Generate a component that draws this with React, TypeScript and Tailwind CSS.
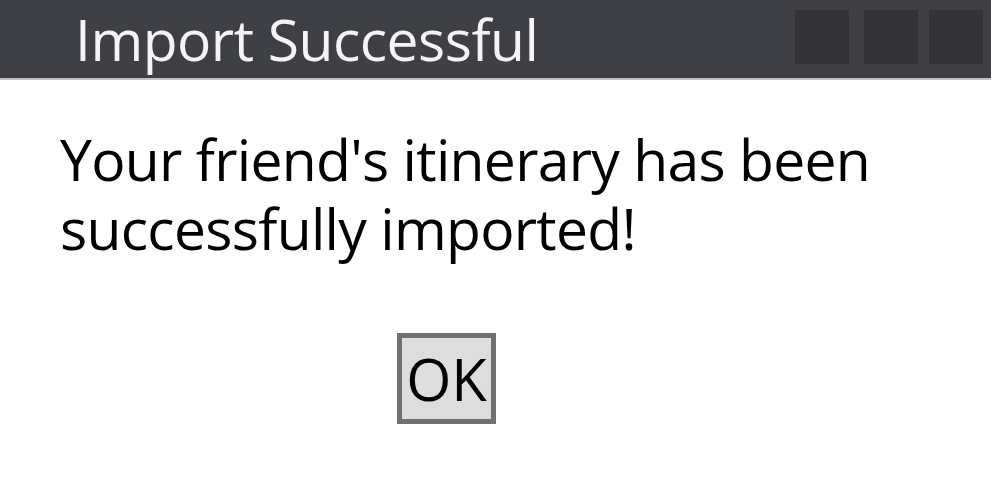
export default function App() {
  return (
    <div className="flex h-[496px] w-[991px] flex-col bg-white font-['Open_Sans',sans-serif]">
      <div className="flex h-[80px] items-start justify-between border-b-2 border-[#c4c4c6] bg-[#3f4045] pl-[75px] pr-[8px]">
        <h1 className="pt-[11px] text-[57px] leading-none tracking-[-0.5px] text-[#f4f4f6]">Import Successful</h1>
        <div className="flex pt-[10px]">
          <div className="mr-[15px] h-[54px] w-[54px] bg-[#343438]" />
          <div className="mr-[11px] h-[54px] w-[54px] bg-[#343438]" />
          <div className="h-[54px] w-[54px] bg-[#343438]" />
        </div>
      </div>
      <div className="flex flex-col px-[60px] pt-[45px]">
        <p className="w-[860px] text-[57px] leading-[69px] tracking-[-0.7px] text-black">
          Your friend's itinerary has been successfully imported!
        </p>
        <div className="mt-[70px] flex">
          <button className="ml-[337px] h-[91px] w-[99px] border-[5px] border-[#707070] bg-[#dddddd] text-[58px] leading-none text-black">
            OK
          </button>
        </div>
      </div>
    </div>
  );
}
